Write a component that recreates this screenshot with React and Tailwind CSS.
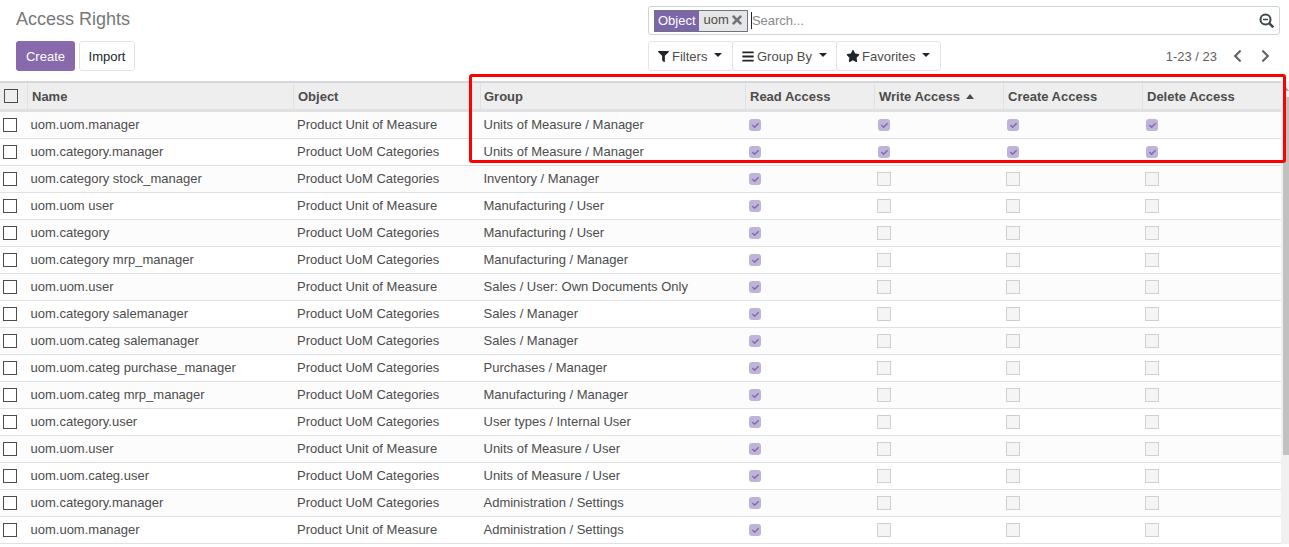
import React from "react";
import { FaFilter, FaBars, FaStar, FaChevronLeft, FaChevronRight, FaTimes, FaCheck } from "react-icons/fa";

const rows = [
  ["uom.uom.manager", "Product Unit of Measure", "Units of Measure / Manager", 1],
  ["uom.category.manager", "Product UoM Categories", "Units of Measure / Manager", 1],
  ["uom.category stock_manager", "Product UoM Categories", "Inventory / Manager", 0],
  ["uom.uom user", "Product Unit of Measure", "Manufacturing / User", 0],
  ["uom.category", "Product UoM Categories", "Manufacturing / User", 0],
  ["uom.category mrp_manager", "Product UoM Categories", "Manufacturing / Manager", 0],
  ["uom.uom.user", "Product Unit of Measure", "Sales / User: Own Documents Only", 0],
  ["uom.category salemanager", "Product UoM Categories", "Sales / Manager", 0],
  ["uom.uom.categ salemanager", "Product UoM Categories", "Sales / Manager", 0],
  ["uom.uom.categ purchase_manager", "Product UoM Categories", "Purchases / Manager", 0],
  ["uom.uom.categ mrp_manager", "Product UoM Categories", "Manufacturing / Manager", 0],
  ["uom.category.user", "Product UoM Categories", "User types / Internal User", 0],
  ["uom.uom.user", "Product Unit of Measure", "Units of Measure / User", 0],
  ["uom.uom.categ.user", "Product UoM Categories", "Units of Measure / User", 0],
  ["uom.category.manager", "Product UoM Categories", "Administration / Settings", 0],
  ["uom.uom.manager", "Product Unit of Measure", "Administration / Settings", 0],
];

const cols = "grid grid-cols-[27px_266px_187px_265px_129px_129px_139px_139px]";

function Check({ on }) {
  if (on)
    return (
      <span className="flex h-[14px] w-[14px] items-center justify-center">
        <span className="flex h-[12px] w-[12px] items-center justify-center rounded-[3px] bg-[#c0b3d9] text-[#7c6ba6]">
          <FaCheck className="h-[7px] w-[7px]" />
        </span>
      </span>
    );
  return <span className="block h-[14px] w-[14px] border border-[#d0d0d0] bg-[#f5f5f5]" />;
}

function Head({ children, className = "pl-[4px]" }) {
  return (
    <div className={`flex h-[26px] items-center truncate border-l border-[#dee2e6] pt-[1px] text-[13px] font-bold text-[#4c4c4c] ${className}`}>
      {children}
    </div>
  );
}

function ToolBtn({ icon, label, className }) {
  return (
    <button className={`flex h-[30px] items-center rounded-[3px] border border-[#e4e4e7] bg-white pl-[9px] text-[13px] text-[#4c4c4c] ${className}`}>
      {icon}
      <span className="mt-[1px]">{label}</span>
      <span className="mb-[2px] ml-[7px] h-0 w-0 border-x-[4px] border-t-[4px] border-x-transparent border-t-[#212529]" />
    </button>
  );
}

export default function App() {
  return (
    <div className="relative h-[547px] w-[1289px] overflow-hidden bg-white font-['Liberation_Sans',sans-serif] text-[13px] text-[#4c4c4c]">
      <header className="flex h-[81px] pl-[16px] pr-[9px]">
        <div className="w-[632px] shrink-0">
          <h1 className="pt-[9px] text-[18px] leading-[20px] text-[#777777]">Access Rights</h1>
          <div className="mt-[12px] flex gap-[4px]">
            <button className="h-[30px] w-[59px] rounded-[3px] bg-[#8769ac] pt-[1px] text-[13px] text-white">Create</button>
            <button className="h-[30px] w-[56px] rounded-[3px] border border-[#dee2e6] bg-white pt-[1px] text-[13px] text-[#212529]">Import</button>
          </div>
        </div>
        <div className="flex-1">
          <div className="mt-[6px] flex h-[29px] items-center rounded-[3px] border border-[#ced4da] pl-[5px] pr-[5px]">
            <div className="flex h-[22px] items-stretch border border-[#6c757d] text-[13px]">
              <span className="flex items-center bg-[#7c65a8] px-[3px] text-white">Object</span>
              <span className="flex items-center gap-[3px] bg-[#e6e6e6] pb-[1px] pl-[5px] pr-[5px] text-[#4c4c4c]">
                uom
                <FaTimes className="h-[14px] w-[10px] text-[#6c757d]" />
              </span>
            </div>
            <span className="ml-[3px] h-[17px] w-px bg-[#212529]" />
            <span className="text-[13px] text-[#8a8a8a]">Search...</span>
            <svg className="ml-auto h-[15px] w-[15px] text-[#3d4a4a]" viewBox="0 0 15 15" fill="none" stroke="currentColor" strokeWidth="2">
              <circle cx="6.5" cy="6.5" r="5" />
              <path d="M4 6.5h5" strokeWidth="1.5" />
              <path d="M10.3 10.3l4 4" strokeWidth="2.6" />
            </svg>
          </div>
          <div className="mt-[6px] flex items-center">
            <ToolBtn className="w-[85px]" icon={<FaFilter className="mr-[3px] h-[11px] w-[11px] text-[#212529]" />} label="Filters" />
            <ToolBtn className="-ml-px w-[105px]" icon={<FaBars className="mr-[3px] h-[13px] w-[12px] text-[#212529]" />} label="Group By" />
            <ToolBtn className="-ml-px w-[105px]" icon={<FaStar className="mr-[2px] h-[12px] w-[14px] text-[#212529]" />} label="Favorites" />
            <span className="ml-auto mt-[1px] -translate-x-px text-[13px] text-[#5f5f5f]">1-23 / 23</span>
            <FaChevronLeft className="ml-[15px] h-[14px] w-[9px] text-[#666666]" />
            <FaChevronRight className="ml-[19px] mr-[10px] h-[14px] w-[9px] text-[#666666]" />
          </div>
        </div>
      </header>

      <div className="flex">
        <div className="w-[1281px] border-t-2 border-[#d5d5da]">
          <div className={`${cols} h-[29px] border-b-[3px] border-[#e0e0e3] bg-[#eeeeee]`}>
            <div className="flex h-[26px] items-center pl-[4px]">
              <span className="block h-[14px] w-[14px] border border-[#4c4c4c] bg-transparent" />
            </div>
            <Head>Name</Head>
            <Head>Object</Head>
            <Head className="pl-[3px]">Group</Head>
            <Head>Read Access</Head>
            <Head>
              Write Access
              <span className="mb-[1px] ml-[6px] h-0 w-0 border-x-[4.5px] border-b-[5px] border-x-transparent border-b-[#4c4c4c]" />
            </Head>
            <Head>Create Access</Head>
            <Head>Delete Access</Head>
          </div>
          {rows.map((r, i) => (
            <div key={i} className={`${cols} h-[27px] items-center border-b border-[#dfe0e6] ${i % 2 === 0 ? "bg-[#fcfcfc]" : "bg-white"}`}>
              <div className="pl-[3px]">
                <span className="block h-[14px] w-[14px] border border-[#4c4c4c] bg-white" />
              </div>
              <div className="truncate pl-[3.5px]">{r[0]}</div>
              <div className="truncate pl-[4px]">{r[1]}</div>
              <div className="truncate pl-[3.5px]">{r[2]}</div>
              <div className="pl-[3px]"><Check on /></div>
              <div className="pl-[3px]"><Check on={r[3]} /></div>
              <div className="pl-[3px]"><Check on={r[3]} /></div>
              <div className="pl-[3px]"><Check on={r[3]} /></div>
            </div>
          ))}
        </div>
        <div className="relative w-[8px] bg-[#f1f1f1]">
          <span className="absolute left-[2px] top-[6px] h-0 w-0 border-x-[3px] border-b-[4px] border-x-transparent border-b-[#a3a3a3]" />
          <div className="absolute inset-x-0 left-[2px] top-[16px] h-[358px] bg-[#c1c1c1]" />
        </div>
      </div>

      <div className="pointer-events-none absolute left-[469px] top-[74px] h-[89px] w-[817px] rounded-[3px] border-[3px] border-[#ff0000]" />
    </div>
  );
}
